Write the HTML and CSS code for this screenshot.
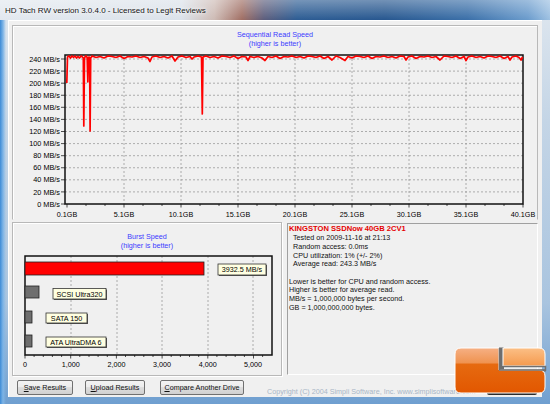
FILE: index.html
```html
<!DOCTYPE html>
<html>
<head>
<meta charset="utf-8">
<title>HD Tach RW</title>
<link rel="stylesheet" href="styles.css">
</head>
<body>
<div class="window">
  <div class="titlebar"><span class="title">HD Tach RW version 3.0.4.0 - Licensed to Legit Reviews</span></div>
  <div class="client">
    <section class="group group-read">
      <svg class="chart" width="524" height="193" viewBox="13 26 524 193">
        <text class="ctitle" x="275" y="37" text-anchor="middle">Sequential Read Speed</text>
        <text class="ctitle" x="275" y="46" text-anchor="middle">(higher is better)</text>
        <path class="grid" d="M65 191.9H523M65 179.8H523M65 167.75H523M65 155.7H523M65 143.6H523M65 131.5H523M65 119.4H523M65 107.3H523M65 95.25H523M65 83.2H523M65 71.1H523M65 59H523M124 55V204M181 55V204M238 55V204M295 55V204M352 55V204M409 55V204M466 55V204"/>
        <path class="tick" d="M61 204H65M61 191.9H65M61 179.8H65M61 167.75H65M61 155.7H65M61 143.6H65M61 131.5H65M61 119.4H65M61 107.3H65M61 95.25H65M61 83.2H65M61 71.1H65M61 59H65M67 204V207.5M124 204V207.5M181 204V207.5M238 204V207.5M295 204V207.5M352 204V207.5M409 204V207.5M466 204V207.5M523 204V207.5M86 204V206M105 204V206M143 204V206M162 204V206M200 204V206M219 204V206M257 204V206M276 204V206M314 204V206M333 204V206M371 204V206M390 204V206M428 204V206M447 204V206M485 204V206M504 204V206"/>
        <rect class="plot" x="65" y="55" width="458" height="149"/>
        <polyline class="read" points="66.8,83 67.5,57 69,56 70.5,58 72,56 73.5,57.5 75,56 76.5,58 78,56.5 79.5,58 81,56 82.5,57 83.3,58 83.8,126 84.5,58 85.5,56 86.5,56 87.2,58 87.8,82 88.3,58 89,57 89.6,58 90.1,131 90.7,58 92,56 96,57.5 100,56.5 104,58 108,56 112,56.5 116,57.5 120,56 124,58.5 128,56.5 132,57 136,56 140,57.5 144,56.5 148,58 150,61.5 152,57 156,56 160,57.5 164,56.5 168,58 172,56 175,61 178,57 182,56 186,57.5 190,56.5 192,59 194,57 198,56 201.5,57 202.3,114 203,57 206,56 210,57.5 214,56.5 218,58 222,56 226,56.5 230,57.5 234,56 238,58.5 242,56.5 246,57 248,60.5 250,56.5 254,57.5 258,56.5 262,58 265,60.5 268,56.5 272,57.5 276,56 280,58.5 284,56.5 288,57 292,56 296,57.5 300,56.5 304,58 308,56 312,56.5 316,57.5 320,56 324,58.5 328,56.5 332,60 336,56 340,57.5 345,60.5 348,56.5 352,58 356,56 360,56.5 364,57.5 368,56 372,58.5 376,56.5 380,57 384,56 388,57.5 392,56.5 396,58 400,56 404,56.5 406,60 408,57 412,56 416,58.5 420,56.5 424,57 428,56 432,57.5 436,56.5 440,60 444,56 448,56.5 452,57.5 456,56 460,58.5 464,56.5 466,60.5 468,57 472,56 476,57.5 480,56.5 484,58 488,56 492,56.5 496,57.5 500,56 504,58.5 508,56.5 510,60 512,57 516,56 519,57.5 521,60 522.5,57"/>
        <g class="ylab">
          <text x="60" y="206.6">0 MB/s</text>
          <text x="60" y="194.5">20 MB/s</text>
          <text x="60" y="182.4">40 MB/s</text>
          <text x="60" y="170.4">60 MB/s</text>
          <text x="60" y="158.3">80 MB/s</text>
          <text x="60" y="146.2">100 MB/s</text>
          <text x="60" y="134.1">120 MB/s</text>
          <text x="60" y="122">140 MB/s</text>
          <text x="60" y="109.9">160 MB/s</text>
          <text x="60" y="97.9">180 MB/s</text>
          <text x="60" y="85.8">200 MB/s</text>
          <text x="60" y="73.7">220 MB/s</text>
          <text x="60" y="61.6">240 MB/s</text>
        </g>
        <g class="xlab">
          <text x="67" y="217">0.1GB</text>
          <text x="124" y="217">5.1GB</text>
          <text x="181" y="217">10.1GB</text>
          <text x="238" y="217">15.1GB</text>
          <text x="295" y="217">20.1GB</text>
          <text x="352" y="217">25.1GB</text>
          <text x="409" y="217">30.1GB</text>
          <text x="466" y="217">35.1GB</text>
          <text x="523" y="217">40.1GB</text>
        </g>
      </svg>
    </section>
    <div class="lower">
      <section class="group group-burst">
        <svg class="chart" width="268" height="152" viewBox="13 223 268 152">
          <text class="ctitle" x="147" y="239" text-anchor="middle">Burst Speed</text>
          <text class="ctitle" x="147" y="248" text-anchor="middle">(higher is better)</text>
          <path class="grid" d="M71 256V355M117 256V355M162 256V355M208 256V355M253 256V355"/>
          <path class="tick" d="M25 355V358.5M70.7 355V358.5M116.4 355V358.5M162.1 355V358.5M207.8 355V358.5M253.5 355V358.5M34.1 355V357M43.3 355V357M52.4 355V357M61.6 355V357M79.8 355V357M89 355V357M98.1 355V357M107.3 355V357M125.5 355V357M134.7 355V357M143.8 355V357M153 355V357M171.2 355V357M180.4 355V357M189.5 355V357M198.7 355V357M216.9 355V357M226.1 355V357M235.2 355V357M244.4 355V357M262.6 355V357"/>
          <rect class="plot" x="25" y="256" width="247" height="99"/>
          <rect class="bar bar-red" x="25" y="262" width="179" height="13"/>
          <rect class="bar" x="25" y="286" width="14" height="12"/>
          <rect class="bar" x="25" y="311" width="7" height="12"/>
          <rect class="bar" x="25" y="335" width="7" height="12"/>
          <rect class="tipshadow" x="219" y="265" width="48" height="11"/>
          <rect class="tip" x="218" y="264" width="48" height="11"/>
          <text class="tiptext" x="242" y="272.4">3932.5 MB/s</text>
          <rect class="tipshadow" x="54" y="289.5" width="53" height="10.5"/>
          <rect class="tip" x="53" y="288.5" width="53" height="10.5"/>
          <text class="tiptext" x="79.5" y="296.6">SCSI Ultra320</text>
          <rect class="tipshadow" x="47" y="314" width="41" height="10"/>
          <rect class="tip" x="46" y="313" width="41" height="10"/>
          <text class="tiptext" x="66.5" y="320.8">SATA 150</text>
          <rect class="tipshadow" x="47" y="338" width="60" height="10"/>
          <rect class="tip" x="46" y="337" width="60" height="10"/>
          <text class="tiptext" x="76" y="344.8">ATA UltraDMA 6</text>
          <g class="xlab">
            <text x="25" y="367">0</text>
            <text x="70.7" y="367">1,000</text>
            <text x="116.4" y="367">2,000</text>
            <text x="162.1" y="367">3,000</text>
            <text x="207.8" y="367">4,000</text>
            <text x="253" y="367">5,000</text>
          </g>
        </svg>
      </section>
      <section class="info">
        <div class="drive">KINGSTON SSDNow 40GB 2CV1</div>
        <div class="detail">Tested on 2009-11-16 at 21:13</div>
        <div class="detail">Random access: 0.0ms</div>
        <div class="detail">CPU utilization: 1% (+/- 2%)</div>
        <div class="detail">Average read: 243.3 MB/s</div>
        <div class="blank"></div>
        <div>Lower is better for CPU and random access.</div>
        <div>Higher is better for average read.</div>
        <div>MB/s = 1,000,000 bytes per second.</div>
        <div>GB = 1,000,000,000 bytes.</div>
      </section>
    </div>
    <div class="footer">
      <button class="btn btn-save"><u>S</u>ave Results</button>
      <button class="btn btn-upload"><u>U</u>pload Results</button>
      <button class="btn btn-compare"><u>C</u>ompare Another Drive</button>
      <span class="copyright">Copyright (C) 2004 Simpli Software, Inc. www.simplisoftware.com</span>
      <button class="btn btn-exit">Exit</button>
    </div>
  </div>
  <svg class="logo" width="94" height="50" viewBox="454 346 94 50">
    <defs>
      <linearGradient id="lg" x1="0" y1="0" x2="0" y2="1">
        <stop offset="0" stop-color="#f6b084"/>
        <stop offset="0.33" stop-color="#ef9350"/>
        <stop offset="0.36" stop-color="#e66a10"/>
        <stop offset="1" stop-color="#e25700"/>
      </linearGradient>
      <linearGradient id="lg2" x1="0" y1="0" x2="0" y2="1">
        <stop offset="0" stop-color="#fbbf86"/>
        <stop offset="1" stop-color="#f59a4e"/>
      </linearGradient>
    </defs>
    <path d="M499 347.5H504V369.5H546V371.5H499Z" fill="#6e6e6e"/>
    <path d="M461 348H499V370H539Q545 370 545 376V387Q545 393 539 393H461Q455 393 455 387V354Q455 348 461 348Z" fill="url(#lg)" stroke="#fff" stroke-width="1"/>
    <path d="M503 348H539Q545 348 545 354V366H503Z" fill="url(#lg2)" stroke="#fff" stroke-width="1"/>
    <path d="M503 366.5H545.5V370H499.5V348" fill="none" stroke="#707070" stroke-width="1.5"/>
  </svg>
</div>
</body>
</html>
```
FILE: styles.css
```css
* { box-sizing: border-box; }
html, body { margin: 0; padding: 0; }
body {
  width: 550px;
  height: 404px;
  overflow: hidden;
  font-family: "Liberation Sans", Arial, sans-serif;
  background: #6f9fd0;
}
.window {
  position: relative;
  width: 550px;
  height: 404px;
  display: flex;
  flex-direction: column;
  padding: 0 8px 7px 8px;
  background:
    linear-gradient(to right, #3d8bd6 0, #7db4e6 3px, rgba(200,216,232,0) 6px),
    linear-gradient(to bottom, #dfe7ef 0, #c4d5e6 30%, #a9c4df 75%, #6f9fd0 100%);
}
.titlebar {
  height: 20px;
  margin: 0 -8px;
  padding-left: 5px;
  display: flex;
  align-items: center;
  background:
    linear-gradient(to bottom, rgba(255,255,255,0.35) 0, rgba(255,255,255,0) 100%),
    linear-gradient(to right, #e2e8ef 0%, #dbe2ea 33%, #cdbab4 39%, #a06e63 44%, #5c5d7c 48%, #2c5c93 54%, #27578f 70%, #3a6fa8 85%, #6a9bcc 96%, #9cc0e2 100%);
}
.title {
  font-size: 8px;
  color: #151515;
  text-shadow: 0 0 3px #fff, 0 0 6px #fff;
  white-space: nowrap;
}
.client {
  flex: 1;
  background: #f0f0f0;
  padding: 5px 4px 0 4px;
  box-shadow: inset 1px 1px 0 #ffffff;
}
.group {
  border: 1px solid #b8b8b8;
  box-shadow: inset 1px 1px 0 #ffffff, 1px 1px 0 #ffffff;
}
.group-read {
  height: 195px;
  border-bottom-color: #f0f0f0;
  box-shadow: inset 1px 1px 0 #ffffff;
}
.chart { display: block; }
.ctitle { fill: #3b3bff; font-size: 7.2px; font-family: "Liberation Sans", Arial, sans-serif; }
.grid { stroke: #9a9a9a; stroke-width: 0.8; stroke-dasharray: 2 2; fill: none; }
.tick { stroke: #222; stroke-width: 0.8; fill: none; }
.plot { fill: none; stroke: #111; stroke-width: 1.5; }
.read { fill: none; stroke: #ff0000; stroke-width: 1.7; stroke-linejoin: round; }
.ylab text { font-size: 7.3px; fill: #000; text-anchor: end; font-family: "Liberation Sans", Arial, sans-serif; }
.xlab text { font-size: 7.2px; fill: #000; text-anchor: middle; font-family: "Liberation Sans", Arial, sans-serif; }
.bar { fill: #6e6e6e; stroke: #222; stroke-width: 0.8; }
.bar-red { fill: #ff0000; }
.tip { fill: #ffffe1; stroke: #333; stroke-width: 0.8; }
.tipshadow { fill: #555; }
.tiptext { font-size: 7.2px; fill: #000; text-anchor: middle; font-family: "Liberation Sans", Arial, sans-serif; }
.lower {
  display: flex;
  gap: 5px;
  margin-top: 2px;
  height: 154px;
}
.group-burst { width: 270px; height: 154px; }
.info {
  width: 251px;
  height: 152px;
  margin-top: 1px;
  border: 1px solid;
  border-color: #a0a0a0 #ffffff #ffffff #a0a0a0;
  padding: 1.4px 0 0 1px;
  font-size: 7.2px;
  line-height: 8.7px;
  color: #111;
}
.info .drive { color: #e60000; font-weight: bold; font-size: 7.6px; }
.info .detail { padding-left: 4px; }
.info .blank { height: 8.7px; }
.footer {
  display: flex;
  align-items: center;
  height: 15px;
  margin-top: 4px;
  padding-left: 5px;
}
.btn {
  height: 15px;
  padding: 0;
  font-family: "Liberation Sans", Arial, sans-serif;
  font-size: 7.2px;
  color: #111;
  border: 1px solid #707070;
  border-radius: 2px;
  background: linear-gradient(#f3f3f3 0, #ececec 50%, #dedede 50%, #d0d0d0 100%);
  white-space: nowrap;
}
.btn-save { width: 56px; }
.btn-upload { width: 60px; margin-left: 12px; }
.btn-compare { width: 84px; margin-left: 15px; }
.copyright {
  margin-left: 23px;
  font-size: 7.2px;
  color: #a9b6c6;
  white-space: nowrap;
  padding-top: 7px;
}
.btn-exit {
  width: 50px;
  margin-left: auto;
  margin-right: 1px;
  border: 2px solid #2a2a2a;
}
.logo {
  position: absolute;
  left: 454px;
  top: 346px;
}
```
